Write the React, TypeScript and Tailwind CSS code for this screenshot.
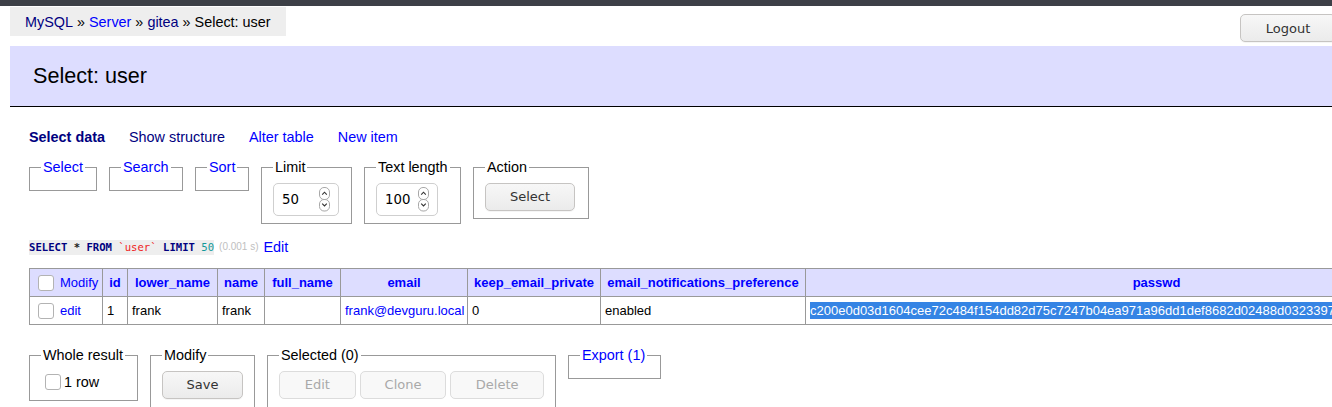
import React from "react";

const btn =
  "h-[28px] rounded-[5px] border border-[#c6c4c2] bg-gradient-to-b from-[#f7f7f7] to-[#ebebeb] font-['DejaVu_Sans',sans-serif] text-[13px] text-[#333] shadow-[0_1px_0_rgba(0,0,0,0.04)]";
const btnOff =
  "h-[28px] rounded-[5px] border border-[#dcdcdc] bg-[#f8f8f8] font-['DejaVu_Sans',sans-serif] text-[13px] text-[#a9a9a9]";

function Spinner() {
  return (
    <svg width="11" height="25" viewBox="0 0 11 25" className="shrink-0">
      <rect x="0.5" y="0.5" width="10" height="12" rx="4.5" fill="#fff" stroke="#a8a8a8" />
      <rect x="0.5" y="12.5" width="10" height="11.5" rx="4.5" fill="#fff" stroke="#a8a8a8" />
      <path d="M3.2 7.6 L5.5 5.2 L7.8 7.6" fill="none" stroke="#333" strokeWidth="1.1" />
      <path d="M3.2 16.6 L5.5 19 L7.8 16.6" fill="none" stroke="#333" strokeWidth="1.1" />
    </svg>
  );
}

function NumberBox({ value, width }: { value: string; width: string }) {
  return (
    <div
      className={`flex h-[33px] items-center justify-between rounded-[5px] border border-[#cfcfcf] bg-white pl-[8px] pr-[8px] ${width}`}
    >
      <span className="font-['DejaVu_Sans',sans-serif] text-[13.3px] text-black">{value}</span>
      <Spinner />
    </div>
  );
}

function Box({ className = "" }: { className?: string }) {
  return (
    <span
      className={`inline-block h-[16px] w-[16px] shrink-0 rounded-[3px] border border-[#b3b3b3] bg-white ${className}`}
    />
  );
}

function Field({
  legend,
  link,
  width = "",
  children,
}: {
  legend: string;
  link?: boolean;
  width?: string;
  children?: React.ReactNode;
}) {
  return (
    <fieldset className={`min-w-0 border border-[#999] px-[11px] pb-[7px] ${width}`}>
      <legend
        className={`whitespace-nowrap px-[2px] leading-[18px] ${link ? "text-[#00f]" : "text-black"}`}
      >
        {legend}
      </legend>
      <div className="pt-[7px]">{children}</div>
    </fieldset>
  );
}

const th = "border border-[#999] px-[4px] text-center font-bold text-[#00f]";
const td = "border border-[#999] px-[4px] text-left";

export default function App() {
  return (
    <div className="relative h-[407px] w-[1332px] overflow-hidden bg-white font-['Liberation_Sans',Arial,sans-serif] text-[14.4px] leading-[18px] text-black">
      <div className="h-[6px] bg-[#3d4047]" />

      <div className="ml-[10px] mt-[1px] flex h-[29px] w-fit items-center bg-[#eee] px-[15px]">
        <span className="text-[#000080]">MySQL</span>
        <span>&nbsp;»&nbsp;</span>
        <span className="text-[#00f]">Server</span>
        <span>&nbsp;»&nbsp;</span>
        <span className="text-[#000080]">gitea</span>
        <span>&nbsp;»&nbsp;Select: user</span>
      </div>

      <button className={`absolute left-[1240px] top-[14px] w-[96px] pt-[1px] ${btn}`}>Logout</button>

      <h2 className="ml-[10px] mt-[10px] flex h-[61px] items-center border-b border-black bg-[#ddf] pl-[23px] text-[21.6px] font-normal">
        Select: user
      </h2>

      <div className="pl-[29px]">
        <p className="mt-[21px] flex gap-[24px]">
          <span className="font-bold text-[#000080]">Select data</span>
          <span className="text-[#000080]">Show structure</span>
          <span className="text-[#00f]">Alter table</span>
          <span className="text-[#00f]">New item</span>
        </p>

        <div className="mt-[12px] flex items-start gap-[12px]">
          <Field legend="Select" link width="w-[68px]" />
          <Field legend="Search" link width="w-[74px]" />
          <Field legend="Sort" link width="w-[54px]" />
          <Field legend="Limit" width="w-[91px]">
            <NumberBox value="50" width="w-[66px]" />
          </Field>
          <Field legend="Text length" width="w-[97px]">
            <NumberBox value="100" width="w-[62px]" />
          </Field>
          <Field legend="Action" width="w-[116px]">
            <button className={`w-[90px] ${btn}`}>Select</button>
          </Field>
        </div>

        <p className="mt-[14px] flex items-center">
          <code className="bg-[#eee] py-[1px] font-['DejaVu_Sans_Mono','Liberation_Mono',monospace] text-[10.6px] leading-[13px]">
            <b className="text-[#000080]">SELECT</b>
            <b className="text-[#222]"> * </b>
            <b className="text-[#000080]">FROM</b>{" "}
            <span className="text-[#e22]">`user`</span>{" "}
            <b className="text-[#000080]">LIMIT</b>{" "}
            <span className="text-[#199]">50</span>
          </code>
          <span className="ml-[5px] text-[10px] text-[#c0c0c0]">(0.001 s)</span>
          <span className="ml-[5px] text-[#00f]">Edit</span>
        </p>

        <table className="mt-[12px] w-[1478px] table-fixed border-collapse text-[13px] leading-[16px]">
          <colgroup>
            <col className="w-[73px]" />
            <col className="w-[25px]" />
            <col className="w-[90px]" />
            <col className="w-[47px]" />
            <col className="w-[76px]" />
            <col className="w-[127px]" />
            <col className="w-[133px]" />
            <col className="w-[205px]" />
            <col className="w-[702px]" />
          </colgroup>
          <thead className="bg-[#ddf]">
            <tr className="h-[28px]">
              <th className="border border-[#999] pl-[8px] text-left font-normal text-[#00f]">
                <span className="flex items-center gap-[6px]">
                  <Box />
                  Modify
                </span>
              </th>
              <th className={th}>id</th>
              <th className={th}>lower_name</th>
              <th className={th}>name</th>
              <th className={th}>full_name</th>
              <th className={th}>email</th>
              <th className={th}>keep_email_private</th>
              <th className={`${th} whitespace-nowrap`}>email_notifications_preference</th>
              <th className={th}>passwd</th>
            </tr>
          </thead>
          <tbody>
            <tr className="h-[28px]">
              <td className="border border-[#999] pl-[8px]">
                <span className="flex items-center gap-[6px] text-[#00f]">
                  <Box />
                  edit
                </span>
              </td>
              <td className={td}>1</td>
              <td className={td}>frank</td>
              <td className={td}>frank</td>
              <td className={td}></td>
              <td className={`${td} whitespace-nowrap text-[#00f]`}>frank@devguru.local</td>
              <td className={td}>0</td>
              <td className={td}>enabled</td>
              <td className={`${td} whitespace-nowrap`}>
                <span className="bg-[#3584e4] py-[1px] text-white">
                  c200e0d03d1604cee72c484f154dd82d75c7247b04ea971a96dd1def8682d02488d0323397
                </span>
              </td>
            </tr>
          </tbody>
        </table>

        <div className="mt-[21px] flex items-start gap-[12px]">
          <Field legend="Whole result" width="w-[109px]">
            <label className="flex h-[22px] items-center gap-[3px] pl-[4px]">
              <Box />
              <span>1 row</span>
            </label>
          </Field>
          <Field legend="Modify" width="w-[105px]">
            <button className={`mb-[2px] w-[81px] ${btn}`}>Save</button>
          </Field>
          <Field legend="Selected (0)" width="w-[289px]">
            <div className="mb-[2px] flex gap-[4px]">
              <button className={`w-[77px] ${btnOff}`}>Edit</button>
              <button className={`w-[87px] ${btnOff}`}>Clone</button>
              <button className={`w-[94px] ${btnOff}`}>Delete</button>
            </div>
          </Field>
          <Field legend="Export (1)" link width="w-[93px]" />
        </div>
      </div>
    </div>
  );
}
